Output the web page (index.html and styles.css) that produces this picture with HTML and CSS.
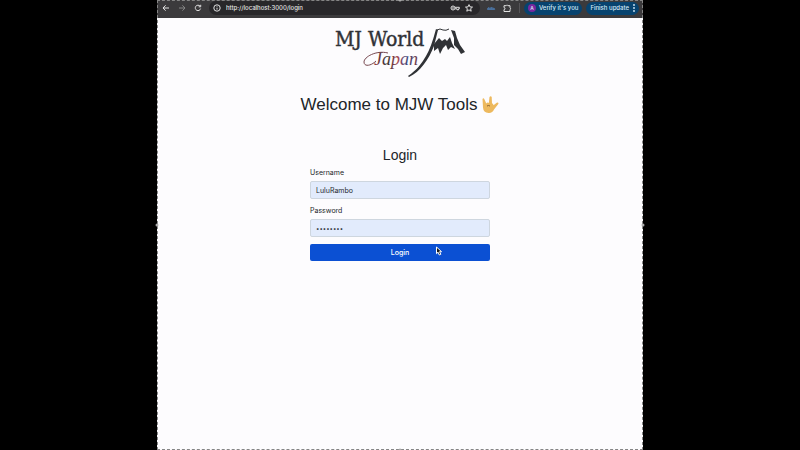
FILE: index.html
```html
<!DOCTYPE html>
<html lang="en">
<head>
<meta charset="utf-8">
<meta name="viewport" content="width=device-width, initial-scale=1">
<title>MJW Tools</title>
<link rel="stylesheet" href="styles.css">
</head>
<body>
<div class="window">
  <header class="toolbar">
    <nav class="nav">
      <button class="icon-button" type="button" aria-label="Back"><svg viewBox="0 0 10 10"><path d="M8 5H2M4.600 2.300L2 5l2.600 2.700"/></svg></button>
      <button class="icon-button dim" type="button" aria-label="Forward"><svg viewBox="0 0 10 10"><path d="M2 5h6M5.400 2.300L8 5L5.400 7.700"/></svg></button>
      <button class="icon-button" type="button" aria-label="Reload"><svg viewBox="0 0 10 10"><path d="M7.600 5.600A2.700 2.700 0 1 1 7 3.100M7.700 1.800v2h-2"/></svg></button>
    </nav>
    <div class="address">
      <svg class="icon" viewBox="0 0 10 10"><circle cx="5" cy="5" r="3.200"/><path d="M5 4.700v1.900M5 3.200v.6"/></svg>
      <input class="url" type="text" aria-label="Address" value="http://localhost:3000/login">
      <button class="icon-button" type="button" aria-label="Passwords"><svg viewBox="0 0 10 10"><circle cx="3" cy="5" r="2"/><circle cx="3" cy="5" r=".4"/><path d="M5 4.300h4.300v1.500H8.500v1H7v-1H5"/></svg></button>
      <button class="icon-button" type="button" aria-label="Bookmark"><svg viewBox="0 0 10 10"><path d="M5 1.600l1 2.300 2.500.2-1.900 1.600.6 2.500L5 6.900 2.800 8.200l.6-2.500L1.500 4.100 4 3.900z"/></svg></button>
    </div>
    <div class="extensions">
      <button class="icon-button extension" type="button" aria-label="Extension"><svg viewBox="0 0 10 10"><path d="M1.500 6.500V5.500L3 4.500l1 1 1.500-1.500L7 5.500l1-.5.700 1.500z"/></svg></button>
      <button class="icon-button" type="button" aria-label="Extensions"><svg viewBox="0 0 10 10"><path d="M2 2.700h2.200a.9.900 0 0 1 1.700 0H8v2.100a.9.900 0 0 1 0 1.700v2H2V6.600a1 1 0 0 0 0-2z"/></svg></button>
    </div>
    <button class="chip verify" type="button"><span class="avatar">A</span>Verify it's you</button>
    <button class="chip update" type="button">Finish update<svg class="dots" viewBox="0 0 4 10"><circle cx="2" cy="2" r=".9"/><circle cx="2" cy="5" r=".9"/><circle cx="2" cy="8" r=".9"/></svg></button>
  </header>
  <main class="page">
    <svg class="logo" viewBox="0 0 134 52" role="img" aria-label="MJ World Japan">
      <defs>
        <linearGradient id="ink" x1="0" x2="1" y1="0" y2="0">
          <stop offset="0" stop-color="#963c45"/><stop offset=".3" stop-color="#333"/>
          <stop offset=".55" stop-color="#a84654"/><stop offset=".75" stop-color="#3d477f"/><stop offset="1" stop-color="#783a43"/>
        </linearGradient>
      </defs>
      <text class="logo-name" x="2" y="20">MJ World</text>
      <text class="logo-script" x="41" y="39">Japan</text>
      <path class="flourish" d="M55 27C43 24 31 31 31 36C31 41 38 40 43 35"/>
      <path class="mountain" d="M103 3L105 4L101 20C96 33 87 46 76 51L75 50C84 44 89 37 93 30Q98 22 103 3z"/>
      <path class="ridge" d="M104 4Q107 2 110 4Q113 5 116 3"/>
      <path class="mountain" d="M101 18L106 12L109 15L112 13L114 15L117 11L119 17L122 23L118 21L115 24L113 19L110 22L107 28L105 22L101 25z"/>
      <path class="mountain" d="M118 4L122 5L124 12L127 19L132 26L128 28L125 23L121 19L121 12z"/>
    </svg>
    <h1 class="title">Welcome to MJW Tools
      <svg class="hand" viewBox="0 0 18 20" role="img" aria-label="Love-you gesture"><path d="M1.500 4q1-1.400 1.900.2L5.300 8.500Q6.500 7 7.800 8L8.500 2q1.300-1.400 2.200.1l.3 6.100q1.400.5 1.500 2l3.200-2.500q1.800-.4 1.800 1L13 14.600Q11.500 18.300 7.500 18 2.300 17.500 2 12.500z"/><path class="crease" d="M6 11q1.500-1 3 0"/></svg>
    </h1>
    <form class="login">
      <h2 class="heading">Login</h2>
      <label class="label" for="username">Username</label>
      <input class="field" id="username" type="text" value="LuluRambo">
      <label class="label" for="password">Password</label>
      <input class="field password" id="password" type="password" value="password">
      <button class="submit" type="button">Login</button>
    </form>
  </main>
  <i class="handle top"></i><i class="handle right"></i><i class="handle bottom"></i><i class="handle left"></i>
</div>
<svg class="cursor" viewBox="0 0 8 10"><path d="M1.500 1v6.700l1.600-1.500 1.200 2.800 1.500-.7-1.200-2.600h2z"/></svg>
</body>
</html>
```
FILE: styles.css
```css
* {
  box-sizing: border-box;
}

body {
  margin: 0;
  background: #000;
  color: #212529;
  font-family: Inter, "Liberation Sans", sans-serif;
}

button,
input {
  font: inherit;
}

.window {
  position: relative;
  display: flex;
  flex-direction: column;
  width: 100%;
  max-width: 486px;
  min-height: 100vh;
  margin: 0 auto;
  background: #fdfcfe;
}

.window::after {
  content: "";
  position: absolute;
  inset: 0;
  border: 1px dashed #858585;
  pointer-events: none;
}

.toolbar {
  display: flex;
  align-items: center;
  height: 18px;
  padding: 0 4px 2px;
  background: #3b3a3c;
  color: #e2e2e2;
}

.nav {
  display: flex;
  gap: 6px;
  margin-right: 6px;
}

.icon-button {
  flex: none;
  width: 10px;
  height: 10px;
  padding: 0;
  border: 0;
  background: none;
  color: inherit;
}

.icon-button svg,
.icon {
  display: block;
  flex: none;
  width: 10px;
  height: 10px;
  fill: none;
  stroke: currentColor;
  stroke-width: 1;
}

.dim {
  color: #858585;
}

.icon-button.extension {
  color: #4a709c;
}

.extension svg {
  fill: currentColor;
}

.address {
  display: flex;
  flex: 1;
  align-items: center;
  gap: 4px;
  min-width: 0;
  height: 14px;
  padding: 0 6px 0 3px;
  border-radius: 7px;
  background: #28272a;
}

.url {
  flex: 1;
  min-width: 0;
  padding: 0;
  border: 0;
  background: none;
  color: #e2e2e2;
  font-size: 6px;
  font-weight: 500;
  line-height: 10px;
}

.extensions {
  display: flex;
  gap: 6px;
  margin: 0 4px 0 6px;
  padding-right: 7px;
  border-right: 1px solid #565558;
}

.chip {
  display: flex;
  flex: none;
  align-items: center;
  height: 13px;
  padding: 0 4px;
  border: 0;
  border-radius: 7px;
  background: #07436f;
  color: #d5e9f8;
  font-size: 6px;
  font-weight: 500;
  line-height: 10px;
  white-space: nowrap;
}

.verify {
  gap: 3px;
  margin-right: 4px;
}

.update {
  gap: 3px;
  padding-right: 3px;
}

.avatar {
  width: 8px;
  height: 8px;
  border-radius: 50%;
  background: #7927a0;
  font-size: 5px;
  line-height: 8px;
  text-align: center;
}

.dots {
  width: 4px;
  height: 10px;
  fill: currentColor;
}

.page {
  display: flex;
  flex: 1;
  flex-direction: column;
  align-items: center;
  padding: 8px 12px;
}

.logo {
  width: 134px;
  height: 52px;
}

.logo-name {
  fill: #303236;
  stroke: #303236;
  stroke-width: .4;
  font: condensed 21px "DejaVu Serif Condensed", "DejaVu Serif", serif;
}

.logo-script {
  fill: url(#ink);
  font: italic 18px "Liberation Serif", serif;
}

.flourish {
  fill: none;
  stroke: #774850;
  stroke-width: 1;
}

.mountain {
  fill: #303236;
}

.ridge {
  fill: none;
  stroke: #303236;
  stroke-width: 1;
}

.title,
.heading {
  font-family: "Liberation Sans", Arial, sans-serif;
  font-weight: 400;
}

.title {
  display: flex;
  align-items: center;
  gap: 4px;
  margin: 16px 0 30px;
  font-size: 17px;
  line-height: 22px;
}

.hand {
  width: 18px;
  height: 20px;
  fill: #edb95e;
}

.crease {
  fill: none;
  stroke: #8b6330;
  stroke-width: 1;
}

.login {
  display: flex;
  flex-direction: column;
  width: 100%;
  max-width: 180px;
}

.heading {
  margin: 0 0 4px;
  font-size: 14px;
  line-height: 18px;
  text-align: center;
}

.label {
  margin-bottom: 3px;
  font-size: 7px;
  line-height: 10px;
}

.field {
  width: 100%;
  height: 18px;
  margin-bottom: 7px;
  padding: 0 5px;
  border: 1px solid #ced6df;
  border-radius: 2px;
  background: #e2ebfc;
  color: #24282e;
  font-size: 7px;
}

.password {
  font-size: 6px;
}

.submit {
  height: 17px;
  padding: 0;
  border: 0;
  border-radius: 2px;
  background: #0b50d3;
  color: #fff;
  font-size: 7px;
  font-weight: 500;
}

.handle {
  position: absolute;
  z-index: 1;
  width: 3px;
  height: 3px;
  border-radius: 50%;
  background: #aaa;
  transform: translate(-50%, -50%);
}

.top { top: 0; left: 50%; }
.bottom { top: 100%; left: 50%; }
.left { top: 50%; left: 0; }
.right { top: 50%; left: 100%; }

.cursor {
  position: absolute;
  top: 246px;
  left: calc(50% + 35px);
  width: 8px;
  height: 10px;
  fill: #151515;
  stroke: #fff;
  stroke-width: 1;
}
```
